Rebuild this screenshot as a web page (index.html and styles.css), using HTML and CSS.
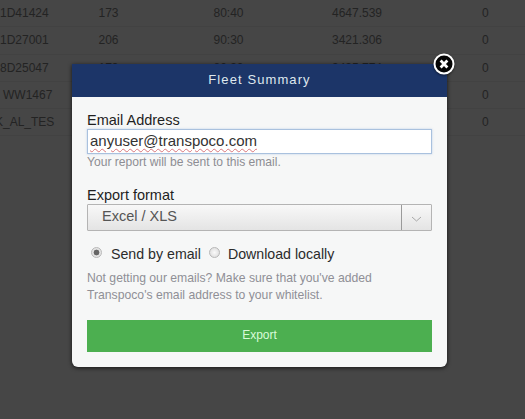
FILE: index.html
```html
<!DOCTYPE html>
<html lang="en">
<head>
<meta charset="utf-8">
<title>Fleet Summary</title>
<link rel="stylesheet" href="styles.css">
</head>
<body>
<div class="table">
  <div class="row"><span class="id">1D41424</span><span>173</span><span>80:40</span><span>4647.539</span><span class="last">0</span></div>
  <div class="row"><span class="id">1D27001</span><span>206</span><span>90:30</span><span>3421.306</span><span class="last">0</span></div>
  <div class="row"><span class="id">8D25047</span><span>173</span><span>80:30</span><span>3435.774</span><span class="last">0</span></div>
  <div class="row"><span class="id wide">WW1467</span><span></span><span></span><span></span><span class="last">0</span></div>
  <div class="row"><span class="id clip">K_AL_TES</span><span></span><span></span><span></span><span class="last">0</span></div>
</div>
<div class="modal">
  <div class="modal-head">Fleet Summary</div>
  <div class="modal-body">
    <div class="label">Email Address</div>
    <div class="input"><span class="typed">anyuser@transpoco.com</span></div>
    <div class="help">Your report will be sent to this email.</div>
    <div class="label format">Export format</div>
    <div class="select">
      <span class="select-value">Excel / XLS</span>
      <span class="select-arrow">
        <svg width="11" height="6" viewBox="0 0 11 6"><path d="M1 1l4.5 4L10 1" fill="none" stroke="#a8a8a8" stroke-width="1"/></svg>
      </span>
    </div>
    <div class="radios">
      <span class="radio on"></span><span class="radio-text">Send by email</span>
      <span class="radio off"></span><span class="radio-text">Download locally</span>
    </div>
    <div class="note">Not getting our emails? Make sure that you've added<br>Transpoco's email address to your whitelist.</div>
    <div class="btn">Export</div>
  </div>
  <div class="close">
    <svg width="22" height="22" viewBox="0 0 22 22"><circle cx="11" cy="11" r="9.5" fill="#050505" stroke="#fff" stroke-width="2"/><path d="M7.6 7.6l6.8 6.8M14.4 7.6l-6.8 6.8" stroke="#fff" stroke-width="2.8"/></svg>
  </div>
</div>
</body>
</html>
```
FILE: styles.css
```css
* { box-sizing: border-box; }
html, body { margin: 0; height: 100%; }
body {
  width: 525px;
  height: 419px;
  overflow: hidden;
  position: relative;
  background: #464646;
  font-family: "Liberation Sans", Arial, sans-serif;
}
.table { display: flex; flex-direction: column; }
.row {
  display: grid;
  grid-template-columns: 62px 93px 147px 110px 113px;
  height: 27.3px;
  align-items: center;
  font-size: 12px;
  color: #232323;
  border-bottom: 1px solid #424242;
}
.row span { text-align: center; }
.row span.last { padding-left: 33px; padding-right: 0; text-align: left; padding-left: 70px; }
.row span.id { text-align: left; white-space: nowrap; }
.row span.wide { padding-left: 3px; }
.row span.clip { margin-left: -5px; }
.modal {
  position: absolute;
  left: 72px;
  top: 64px;
  width: 375px;
  height: 303px;
  background: #f6f7f7;
  border-radius: 0 0 6px 6px;
  box-shadow: 0 1px 4px rgba(0,0,0,.7);
}
.modal-head {
  height: 33px;
  background: #1c3568;
  color: #dfe8ee;
  font-size: 13px;
  letter-spacing: 1.1px;
  text-align: center;
  line-height: 32px;
}
.modal-body { padding: 14px 15px 0; }
.label { font-size: 14.5px; line-height: 18px; color: #1f1f1f; }
.label.format { margin-top: 15px; }
.input {
  height: 25px;
  background: #fff;
  border: 1px solid #a9c1de;
  box-shadow: 0 0 2px rgba(130,170,220,.5);
  padding-left: 2px;
  font-size: 15px;
  line-height: 22px;
  color: #333;
}
.typed { text-decoration: underline wavy #d9767c 1px; text-underline-offset: 2px; }
.help { font-size: 12.1px; line-height: 17px; color: #8d8d93; }
.select {
  height: 27px;
  display: flex;
  background: linear-gradient(#f8f8f8, #e4e4e4);
  border: 1px solid #b4b4b4;
  border-radius: 1px;
}
.select-value { flex: 1; padding-left: 14px; font-size: 14.5px; line-height: 22px; color: #555; }
.select-arrow {
  width: 30px;
  border-left: 1px solid #9a9a9a;
  display: flex;
  align-items: center;
  justify-content: center;
  padding-top: 2px;
}
.radios { display: flex; align-items: center; margin-top: 14px; height: 18px; font-size: 14.2px; color: #2b2b2b; padding-left: 4px; }
.radio { width: 11px; height: 11px; border-radius: 50%; border: 1px solid #b8b8b8; background: radial-gradient(#fafafa, #d8d8d8); margin-top: -3px; }
.radio.on { background: radial-gradient(circle, #666 0 2.6px, #e4e4e4 3.2px); }
.radio-text { margin-left: 9px; margin-right: 8px; }
.radio.off + .radio-text { margin-left: 8px; }
.note { margin-top: 7px; font-size: 12.2px; line-height: 17px; color: #8f8f96; }
.btn {
  margin-top: 16px;
  height: 32px;
  background: #4caf50;
  color: #d8fbd8;
  font-size: 12px;
  line-height: 31px;
  text-align: center;
}
.close { position: absolute; left: 361px; top: -11px; width: 22px; height: 22px; filter: drop-shadow(0 1px 1px rgba(0,0,0,.5)); }
.close svg { display: block; }
```
